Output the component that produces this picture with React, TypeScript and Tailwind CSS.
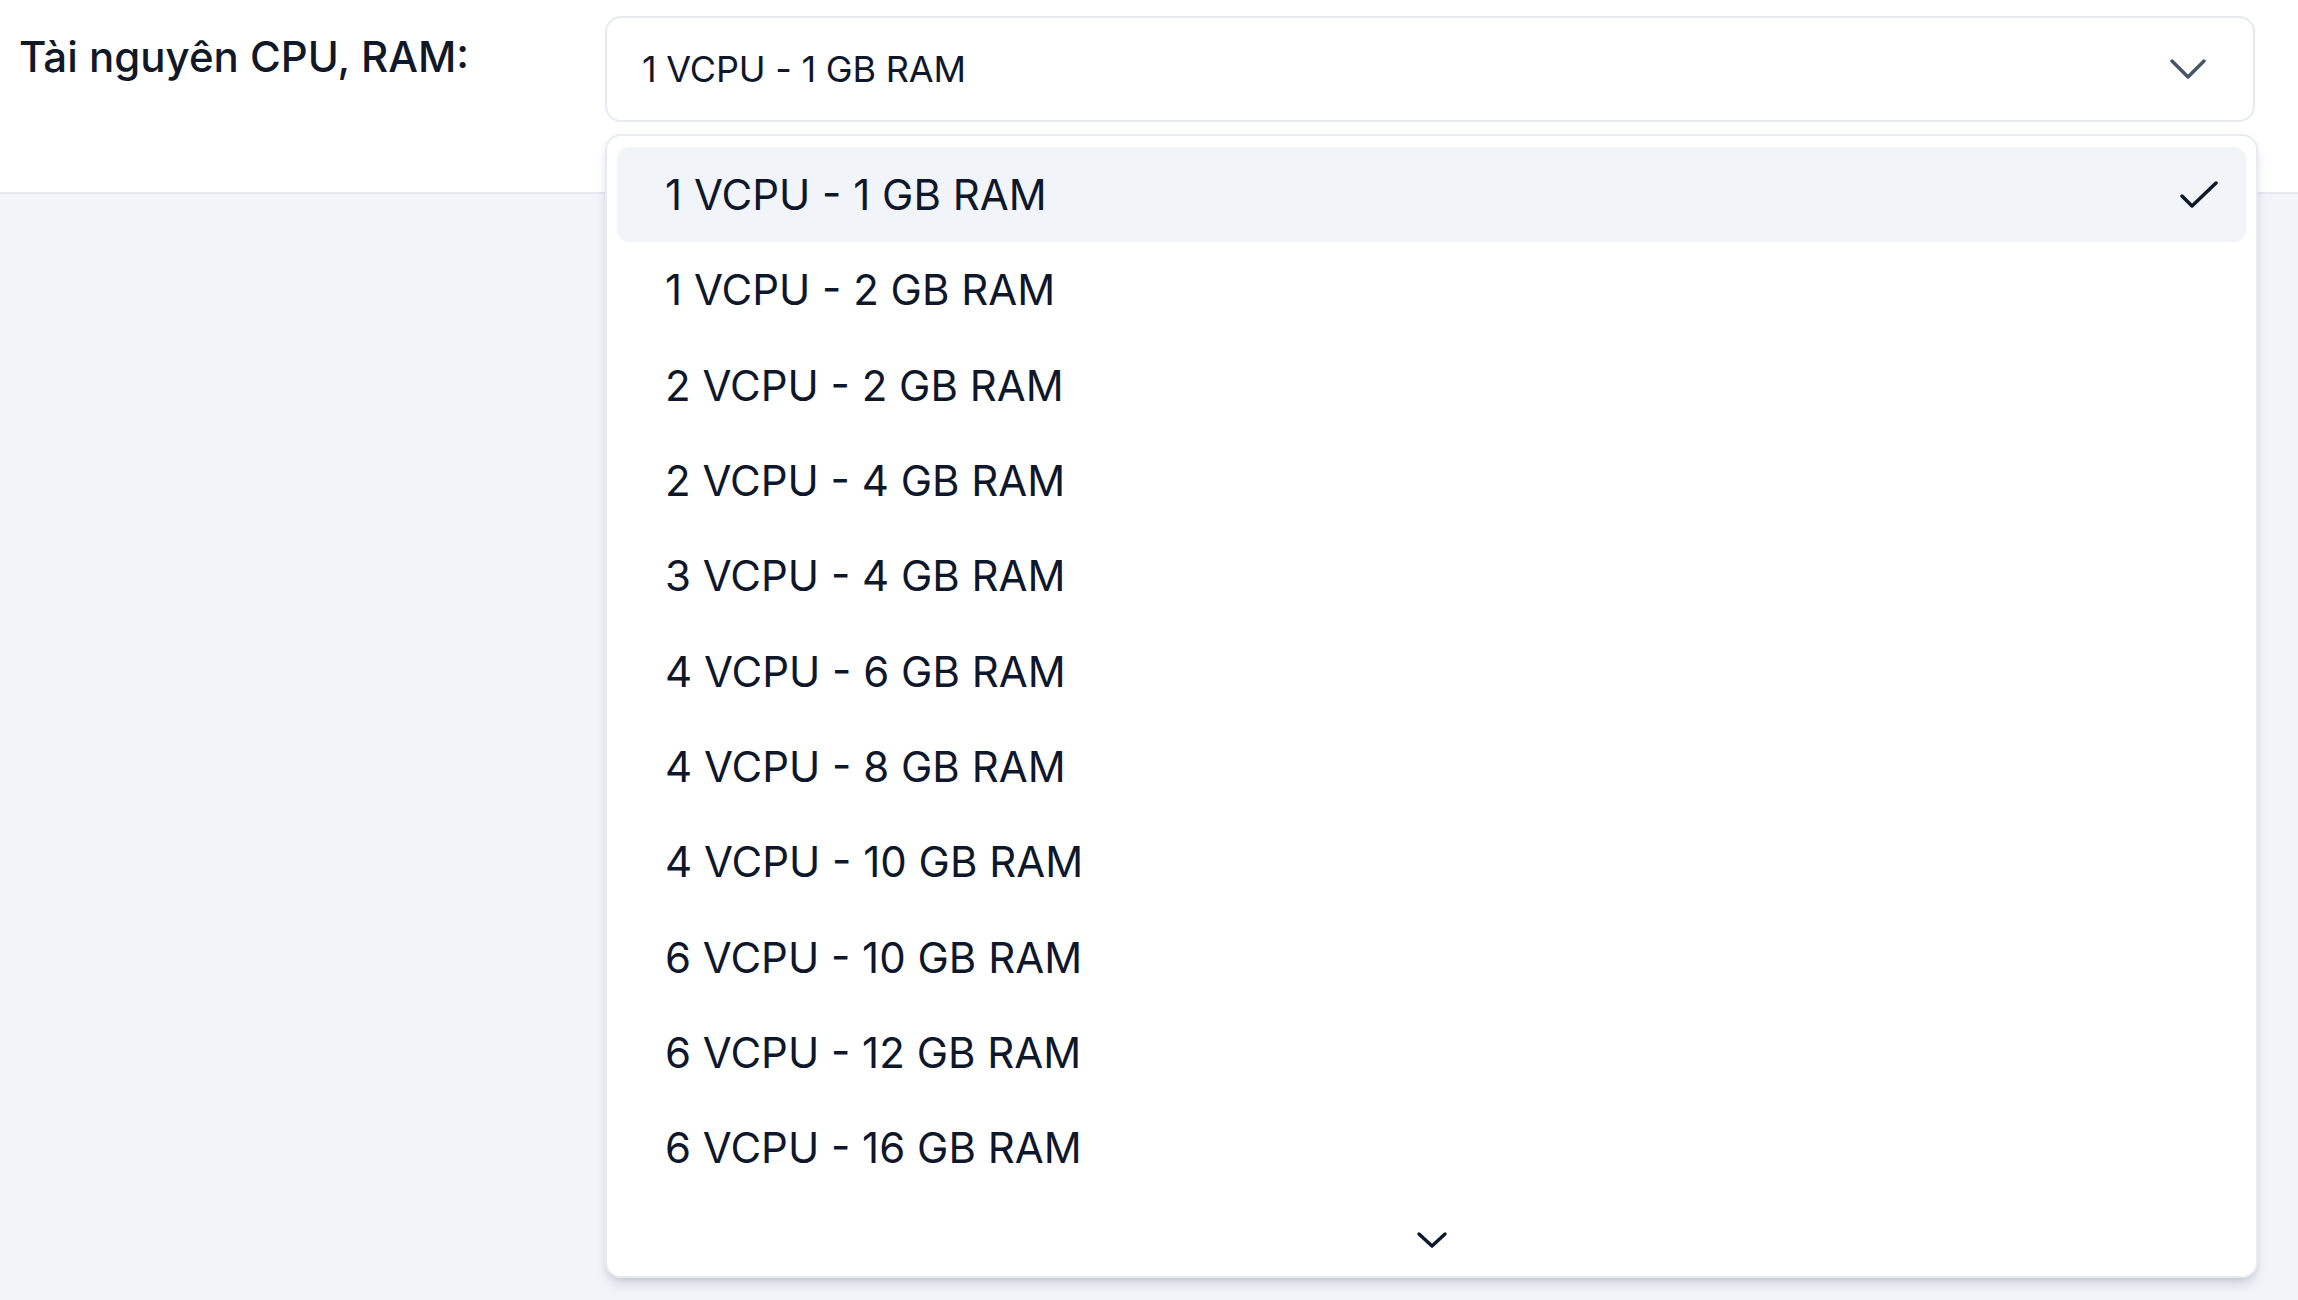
const options = [
  "1 VCPU - 1 GB RAM",
  "1 VCPU - 2 GB RAM",
  "2 VCPU - 2 GB RAM",
  "2 VCPU - 4 GB RAM",
  "3 VCPU - 4 GB RAM",
  "4 VCPU - 6 GB RAM",
  "4 VCPU - 8 GB RAM",
  "4 VCPU - 10 GB RAM",
  "6 VCPU - 10 GB RAM",
  "6 VCPU - 12 GB RAM",
  "6 VCPU - 16 GB RAM",
];

const selected = options[0];

export default function App() {
  return (
    <div className="min-h-screen bg-[#f1f4f9] font-['Inter','Noto_Sans',sans-serif] text-[#0f172a]">
      <header className="flex h-[194px] items-start border-b-2 border-[#e5e8ee] bg-white">
        <label className="w-[605px] shrink-0 pl-[19px] pt-[30px] text-[42px] leading-[54px] font-medium text-[#111827]">
          Tài nguyên CPU, RAM:
        </label>

        <div className="relative mr-[43px] mt-[16px] flex-1">
          <button className="flex h-[106px] w-full items-center justify-between rounded-[16px] border-2 border-[#e6eaf0] bg-white pl-[35px] pr-[47px] text-left">
            <span className="text-[36px] tracking-[-0.2px] text-[#0f172a]">{selected}</span>
            <svg width="36" height="22" viewBox="0 0 36 22" fill="none" className="text-[#475569]">
              <path d="M2 3 L18 19 L34 3" stroke="currentColor" strokeWidth="3.5" strokeLinecap="round" strokeLinejoin="round" />
            </svg>
          </button>

          {/* open listbox */}
          <div className="absolute left-0 right-[-3px] top-[118px] z-10 rounded-[16px] border-2 border-[#e8ecf1] bg-white px-[10px] pt-[11px] shadow-[0_8px_14px_-4px_rgba(15,23,42,0.18),0_3px_6px_-2px_rgba(15,23,42,0.08)]">
            <ul>
              {options.map((o) => (
                <li
                  key={o}
                  className={`flex h-[95.3px] items-center justify-between rounded-[12px] pl-[48px] pr-[28px] text-[42px] ${
                    o === selected ? "bg-[#f1f4f9]" : ""
                  }`}
                >
                  <span>{o}</span>
                  {o === selected && (
                    <svg width="38" height="28" viewBox="0 0 38 28" fill="none">
                      <path d="M2 15 L12 25 L36 2" stroke="#0f172a" strokeWidth="3.5" strokeLinecap="round" strokeLinejoin="round" />
                    </svg>
                  )}
                </li>
              ))}
            </ul>
            <div className="flex h-[81px] items-center justify-center pt-[8px]">
              <svg width="32" height="18" viewBox="0 0 32 18" fill="none">
                <path d="M3 3 L16 15 L29 3" stroke="#0f172a" strokeWidth="3.5" strokeLinecap="round" strokeLinejoin="round" />
              </svg>
            </div>
          </div>
        </div>
      </header>
    </div>
  );
}
